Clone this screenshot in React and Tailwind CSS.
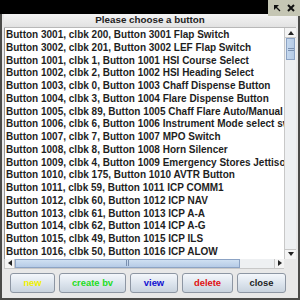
const rows = [
  "Button 3001, clbk 200, Button 3001 Flap Switch",
  "Button 3002, clbk 201, Button 3002 LEF Flap Switch",
  "Button 1001, clbk 1, Button 1001 HSI Course Select",
  "Button 1002, clbk 2, Button 1002 HSI Heading Select",
  "Button 1003, clbk 0, Button 1003 Chaff Dispense Button",
  "Button 1004, clbk 3, Button 1004 Flare Dispense Button",
  "Button 1005, clbk 89, Button 1005 Chaff Flare Auto/Manual",
  "Button 1006, clbk 6, Button 1006 Instrument Mode select switch",
  "Button 1007, clbk 7, Button 1007 MPO Switch",
  "Button 1008, clbk 8, Button 1008 Horn Silencer",
  "Button 1009, clbk 4, Button 1009 Emergency Stores Jettison",
  "Button 1010, clbk 175, Button 1010 AVTR Button",
  "Button 1011, clbk 59, Button 1011 ICP COMM1",
  "Button 1012, clbk 60, Button 1012 ICP NAV",
  "Button 1013, clbk 61, Button 1013 ICP A-A",
  "Button 1014, clbk 62, Button 1014 ICP A-G",
  "Button 1015, clbk 49, Button 1015 ICP ILS",
  "Button 1016, clbk 50, Button 1016 ICP ALOW",
];

function Btn({ children, color, w }) {
  return (
    <div
      className={`h-[20px] ${w} flex items-center justify-center rounded-[3px] border border-[#8d96a3] bg-gradient-to-b from-[#f4f7fb] via-[#dde5ee] to-[#c9d3de] text-[9.4px] font-bold ${color}`}
    >
      {children}
    </div>
  );
}

export default function App() {
  return (
    <div
      className="w-[300px] h-[300px] bg-black overflow-hidden flex flex-col"
      style={{ fontFamily: '"Liberation Sans", Arial, sans-serif' }}
    >
      <div className="h-[14px] flex justify-end shrink-0">
        <div className="w-[32px] h-[16px] bg-[#c5c6b4] flex items-center justify-center gap-[6px] z-10">
          <svg width="7" height="7" viewBox="0 0 7 7">
            <path d="M0 0 L5 0 L0 5 Z" fill="#111" />
            <path d="M2 2 L6 6" stroke="#111" strokeWidth="1.3" />
          </svg>
          <svg width="8" height="8" viewBox="0 0 8 8">
            <path d="M1 1 L7 7 M7 1 L1 7" stroke="#111" strokeWidth="2" />
          </svg>
        </div>
      </div>
      <div className="flex-1 bg-[#e8e8e8] border-l-[2px] border-r-[2px] border-b-[3px] border-[#4a4a48] flex flex-col pl-[2px] pr-[2px]">
        <div className="h-[14px] shrink-0 flex items-center justify-center text-[9.8px] font-bold text-[#222] bg-gradient-to-b from-[#f4f4f4] to-[#e2e2e2] border-b border-[#b8b8b8]">
          Please choose a button
        </div>
        <div className="flex-1 flex border-l border-[#999] min-h-0">
          <div className="flex-1 bg-white overflow-hidden pl-[1px] pt-[1px]">
            {rows.map((r) => (
              <div
                key={r}
                className="h-[12.75px] leading-[12.75px] text-[10px] font-bold text-[#1e1e1e] whitespace-nowrap"
              >
                {r}
              </div>
            ))}
          </div>
          <div className="w-[12px] bg-[#eef0f2] border-l border-[#c8c8c8] flex flex-col">
            <div className="h-[10px] flex items-center justify-center border-b border-[#c8c8c8] bg-[#f4f4f4]">
              <svg width="6" height="4" viewBox="0 0 6 4"><path d="M0 4 L3 0 L6 4 Z" fill="#222" /></svg>
            </div>
            <div className="h-[22px] mx-[1px] bg-gradient-to-r from-[#c5d8ee] to-[#b4cae6] border border-[#8ca3c4] flex items-center justify-center">
              <div className="w-[6px] h-[3px] border-t border-b border-[#7a90b0]" />
            </div>
            <div className="flex-1" />
            <div className="h-[10px] flex items-center justify-center border-t border-[#c8c8c8] bg-[#f4f4f4]">
              <svg width="6" height="4" viewBox="0 0 6 4"><path d="M0 0 L3 4 L6 0 Z" fill="#222" /></svg>
            </div>
          </div>
        </div>
        <div className="h-[10px] shrink-0 flex border-l border-[#999] mr-[12px] bg-[#eef0f2] border-b border-[#c8c8c8]">
          <div className="w-[10px] flex items-center justify-center border-r border-[#c8c8c8] bg-[#f4f4f4]">
            <svg width="4" height="6" viewBox="0 0 4 6"><path d="M4 0 L0 3 L4 6 Z" fill="#222" /></svg>
          </div>
          <div className="w-[225px] bg-gradient-to-b from-[#cfe0f2] to-[#b6cbe6] border border-[#8ca3c4] flex items-center justify-center">
            <div className="w-[3px] h-[6px] border-l border-r border-[#7a90b0]" />
          </div>
          <div className="flex-1" />
          <div className="w-[10px] flex items-center justify-center border-l border-[#c8c8c8] bg-[#f4f4f4]">
            <svg width="4" height="6" viewBox="0 0 4 6"><path d="M0 0 L4 3 L0 6 Z" fill="#222" /></svg>
          </div>
        </div>
        <div className="h-[29px] shrink-0 flex items-center pl-[6px] gap-[4px]">
          <Btn w="w-[45px]" color="text-[#f0f000]">new</Btn>
          <Btn w="w-[67px]" color="text-[#22dd22]">create bv</Btn>
          <Btn w="w-[48px]" color="text-[#1010d0]">view</Btn>
          <Btn w="w-[51px]" color="text-[#e01010]">delete</Btn>
          <Btn w="w-[49px]" color="text-[#222]">close</Btn>
        </div>
      </div>
    </div>
  );
}
